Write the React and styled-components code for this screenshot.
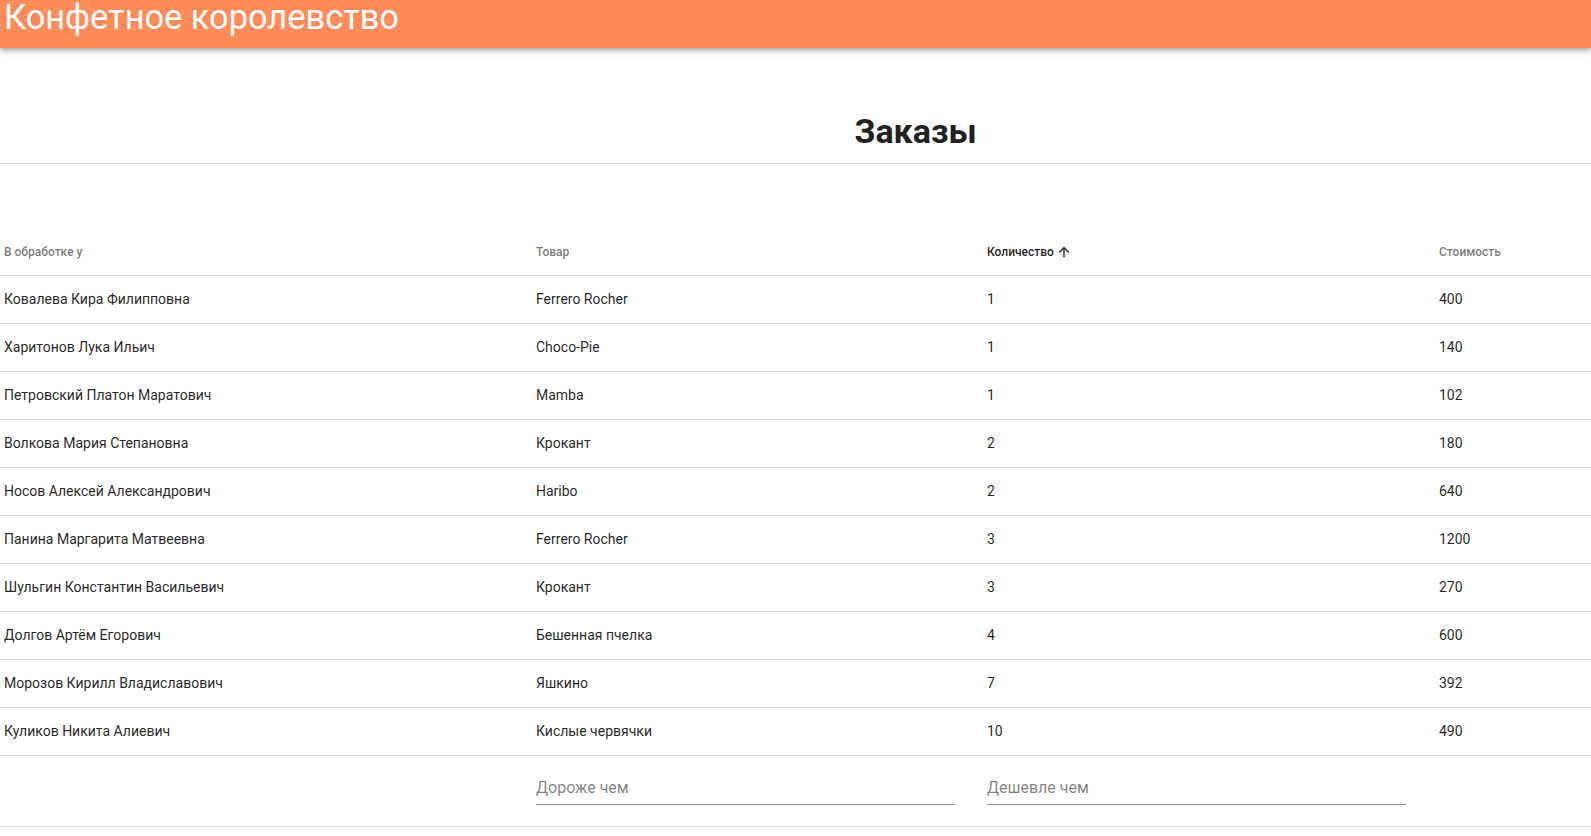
import React from "react";
import styled, { createGlobalStyle } from "styled-components";

const text = {
    brand: "Конфетное королевство",
    title: "Заказы",
    moreThan: "Дороже чем",
    lessThan: "Дешевле чем"
};

const columns = [
    { key: "manager", label: "В обработке у" },
    { key: "product", label: "Товар" },
    { key: "amount", label: "Количество", active: true },
    { key: "price", label: "Стоимость" }
];

const orders = [
    ["Ковалева Кира Филипповна", "Ferrero Rocher", "1", "400"],
    ["Харитонов Лука Ильич", "Choco-Pie", "1", "140"],
    ["Петровский Платон Маратович", "Mamba", "1", "102"],
    ["Волкова Мария Степановна", "Крокант", "2", "180"],
    ["Носов Алексей Александрович", "Haribo", "2", "640"],
    ["Панина Маргарита Матвеевна", "Ferrero Rocher", "3", "1200"],
    ["Шульгин Константин Васильевич", "Крокант", "3", "270"],
    ["Долгов Артём Егорович", "Бешенная пчелка", "4", "600"],
    ["Морозов Кирилл Владиславович", "Яшкино", "7", "392"],
    ["Куликов Никита Алиевич", "Кислые червячки", "10", "490"]
];

const ArrowUp = () => (
    <SortIcon viewBox="0 0 24 24">
        <path d="M4 12l1.41 1.41L11 7.83V20h2V7.83l5.58 5.59L20 12l-8-8-8 8z" />
    </SortIcon>
);

const App = () => (
    <>
        <GlobalStyle />
        <AppBar>
            <Brand>{text.brand}</Brand>
        </AppBar>
        <TitleBlock>
            <Title>{text.title}</Title>
        </TitleBlock>
        <Table>
            <HeadRow>
                {columns.map(col => (
                    <HeadCell key={col.key} active={col.active}>
                        {col.label}
                        {col.active && <ArrowUp />}
                    </HeadCell>
                ))}
            </HeadRow>
            {orders.map((row, i) => (
                <Row key={`order-${i}`}>
                    {row.map((cell, j) => (
                        <Cell key={`cell-${i}-${j}`}>{cell}</Cell>
                    ))}
                </Row>
            ))}
            <FooterRow>
                <Cell />
                <Cell>
                    <Field>
                        <Input placeholder={text.moreThan} />
                    </Field>
                </Cell>
                <Cell>
                    <Field>
                        <Input placeholder={text.lessThan} />
                    </Field>
                </Cell>
                <Cell />
            </FooterRow>
        </Table>
    </>
);

const GlobalStyle = createGlobalStyle`
    html, body {
        margin: 0;
        padding: 0;
        background: #fff;
        font-family: Roboto, "Liberation Sans", sans-serif;
    }
    * {
        box-sizing: border-box;
    }
`;

const AppBar = styled.header`
    position: relative;
    z-index: 2;
    height: 48px;
    background-color: #ff8a5a;
    box-shadow: 0 2px 4px -1px rgba(0, 0, 0, 0.2), 0 4px 5px 0 rgba(0, 0, 0, 0.14),
        0 1px 10px 0 rgba(0, 0, 0, 0.12);
    overflow: hidden;
`;

const Brand = styled.h1`
    margin: 0;
    padding-left: 4px;
    font-size: 34.4px;
    line-height: 34px;
    font-weight: 400;
    color: #fff;
    white-space: nowrap;
`;

const TitleBlock = styled.div`
    padding: 62px 0 11px 240px;
    border-bottom: 1px solid #e0e0e0;
    text-align: center;
`;

const Title = styled.h2`
    margin: 0;
    font-size: 34px;
    line-height: 42px;
    font-weight: 700;
    color: #212121;
`;

const Table = styled.div`
    margin-top: 65px;
`;

const grid = `
    display: grid;
    grid-template-columns: 532px 451px 452px 1fr;
    border-bottom: 1px solid #e0e0e0;
`;

const HeadRow = styled.div`
    ${grid};
    height: 47px;
    align-items: center;
`;

const Row = styled.div`
    ${grid};
    height: 48px;
    padding-bottom: 2px;
    align-items: center;
`;

const FooterRow = styled.div`
    ${grid};
    height: 71px;
    align-items: start;
`;

const HeadCell = styled.div`
    display: flex;
    align-items: center;
    padding-left: 4px;
    font-size: 12px;
    font-weight: 500;
    color: ${p => (p.active ? "rgba(0, 0, 0, 0.87)" : "rgba(0, 0, 0, 0.54)")};
`;

const SortIcon = styled.svg`
    width: 16px;
    height: 16px;
    margin-left: 2px;
    fill: rgba(0, 0, 0, 0.87);
`;

const Cell = styled.div`
    padding-left: 4px;
    font-size: 14px;
    font-weight: 400;
    color: rgba(0, 0, 0, 0.87);
`;

const Field = styled.div`
    width: 419px;
    margin-top: 16px;
    border-bottom: 1px solid rgba(0, 0, 0, 0.42);
`;

const Input = styled.input`
    display: block;
    width: 100%;
    height: 32px;
    padding: 6px 0 7px;
    border: none;
    outline: none;
    background: transparent;
    font-family: Roboto, "Liberation Sans", sans-serif;
    font-size: 16px;
    color: rgba(0, 0, 0, 0.87);

    &::placeholder {
        color: rgba(0, 0, 0, 0.5);
        opacity: 1;
    }
`;

export default App;
